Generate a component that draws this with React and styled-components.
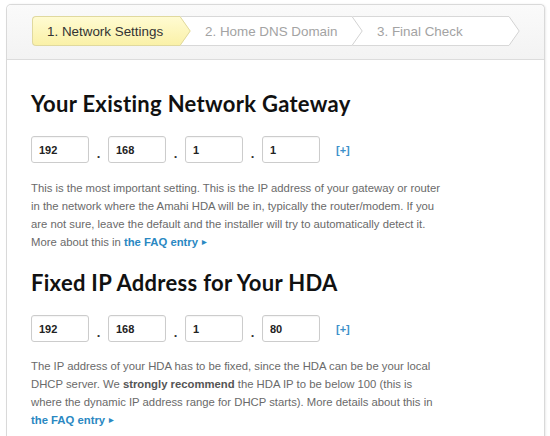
import React from 'react';
import styled, { createGlobalStyle } from 'styled-components';

const GlobalStyle = createGlobalStyle`
  html, body {
    margin: 0;
    padding: 0;
    background: #ffffff;
  }
  body {
    font-family: "Liberation Sans", Arial, sans-serif;
  }
`

const Panel = styled.div`
  box-sizing: border-box;
  margin: 4px 0 0 6px;
  width: 539px;
  height: 440px;
  border: 1px solid #d9d9d9;
  border-bottom: none;
  border-radius: 5px 5px 0 0;
  box-shadow: 1px 0 2px rgba(0, 0, 0, 0.08);
  background: #fff;
  overflow: hidden;
`

const Header = styled.div`
  box-sizing: border-box;
  height: 55px;
  padding: 11px 0 0 25px;
  background: linear-gradient(#fafafa, #f3f3f3);
  border-bottom: 1px solid #dcdcdc;
  border-radius: 5px 5px 0 0;
`

const TabBar = styled.div`
  display: flex;
  height: 30px;
`

const TabLabel = styled.div`
  box-sizing: border-box;
  width: ${p => p.$width}px;
  height: 30px;
  padding-left: 14px;
  display: flex;
  align-items: center;
  font-size: 13.4px;
  color: ${p => (p.$active ? '#333333' : '#a3a3a3')};
  background: ${p => (p.$active ? 'linear-gradient(#fffbd2, #faf1a8)' : '#ffffff')};
  border-top: 1px solid ${p => (p.$active ? '#e0d99e' : '#d8d8d8')};
  border-bottom: 1px solid ${p => (p.$active ? '#e0d99e' : '#d8d8d8')};
  border-left: ${p => (p.$first ? '1px solid #e0d99e' : 'none')};
  border-radius: ${p => (p.$first ? '4px 0 0 4px' : '0')};
`

const Tab = styled.div`
  display: flex;
`

const Chevron = ({ active, last }) => (
  <svg width="11" height="30" viewBox="0 0 11 30" style={{ display: 'block' }}>
    <defs>
      <linearGradient id="tabYellow" x1="0" y1="0" x2="0" y2="1">
        <stop offset="0" stopColor="#fffbd2" />
        <stop offset="1" stopColor="#faf1a8" />
      </linearGradient>
    </defs>
    {!last && <rect x="0" y="0" width="11" height="30" fill="#ffffff" />}
    {!last && <line x1="0" y1="0.5" x2="11" y2="0.5" stroke="#d8d8d8" />}
    {!last && <line x1="0" y1="29.5" x2="11" y2="29.5" stroke="#d8d8d8" />}
    <polygon points="0,0 10.5,15 0,30" fill={active ? 'url(#tabYellow)' : '#ffffff'} />
    <polyline
      points="0,0.5 10.2,15 0,29.5"
      fill="none"
      stroke={active ? '#e0d99e' : '#d2d2d2'}
      strokeWidth="1"
    />
  </svg>
)

const Content = styled.div`
  padding: 32px 24px 0 24px;
`

const Heading = styled.h2`
  margin: 0 0 20px 0;
  font-family: "Lato", "Open Sans", sans-serif;
  font-weight: 700;
  font-size: 22px;
  line-height: 24px;
  letter-spacing: 0.3px;
  color: #111111;
`

const IpRow = styled.div`
  display: flex;
  align-items: center;
  height: 27px;
`

const OctetInput = styled.input`
  box-sizing: border-box;
  width: 58px;
  height: 27px;
  margin: 0;
  padding: 0 0 0 7px;
  border: 1px solid #cccccc;
  border-radius: 3px;
  font-family: "Liberation Sans", Arial, sans-serif;
  font-weight: 700;
  font-size: 11px;
  color: #222222;
  background: #fff;
  box-shadow: inset 0 1px 1px rgba(0, 0, 0, 0.04);
  outline: none;
`

const Dot = styled.span`
  width: 19px;
  text-align: center;
  align-self: flex-end;
  font-size: 13px;
  font-weight: 700;
  color: #333;
  line-height: 18px;
`

const AddLink = styled.a`
  margin-left: 16px;
  font-family: "Liberation Sans", Arial, sans-serif;
  font-size: 11px;
  font-weight: 700;
  color: #3b8fca;
  text-decoration: none;
  cursor: pointer;
`

const Text = styled.p`
  margin: ${p => p.$top}px 0 20px 0;
  max-width: 412px;
  font-size: 11.3px;
  line-height: 18px;
  color: #6a6a6a;

  strong {
    color: #555555;
  }
`

const FaqLink = styled.a`
  font-weight: 700;
  color: #2a88c2;
  text-decoration: none;
  white-space: nowrap;
  cursor: pointer;
`

const Arrow = styled.span`
  margin-left: 4px;
  font-size: 6px;
  vertical-align: 2px;
`

const tabs = [
  { label: '1. Network Settings', width: 148 },
  { label: '2. Home DNS Domain', width: 161 },
  { label: '3. Final Check', width: 146 },
]

const IpFields = ({ octets }) => (
  <IpRow>
    {octets.map((o, i) => (
      <React.Fragment key={i}>
        {i > 0 && <Dot>.</Dot>}
        <OctetInput defaultValue={o} />
      </React.Fragment>
    ))}
    <AddLink>[+]</AddLink>
  </IpRow>
)

const Faq = () => (
  <FaqLink>
    the FAQ entry<Arrow>▶</Arrow>
  </FaqLink>
)

const App = () => (
  <>
    <GlobalStyle />
    <Panel>
      <Header>
        <TabBar>
          {tabs.map((t, i) => (
            <Tab key={t.label}>
              <TabLabel $width={t.width} $active={i === 0} $first={i === 0}>
                {t.label}
              </TabLabel>
              <Chevron active={i === 0} last={i === tabs.length - 1} />
            </Tab>
          ))}
        </TabBar>
      </Header>
      <Content>
        <Heading>Your Existing Network Gateway</Heading>
        <IpFields octets={['192', '168', '1', '1']} />
        <Text $top={16}>
          This is the most important setting. This is the IP address of your gateway or router
          in the network where the Amahi HDA will be in, typically the router/modem. If you
          are not sure, leave the default and the installer will try to automatically detect it.
          More about this in <Faq />
        </Text>
        <Heading>Fixed IP Address for Your HDA</Heading>
        <IpFields octets={['192', '168', '1', '80']} />
        <Text $top={15}>
          The IP address of your HDA has to be fixed, since the HDA can be be your local
          DHCP server. We <strong>strongly recommend</strong> the HDA IP to be below 100 (this is
          where the dynamic IP address range for DHCP starts). More details about this in{' '}
          <Faq />
        </Text>
      </Content>
    </Panel>
  </>
)

export default App;
